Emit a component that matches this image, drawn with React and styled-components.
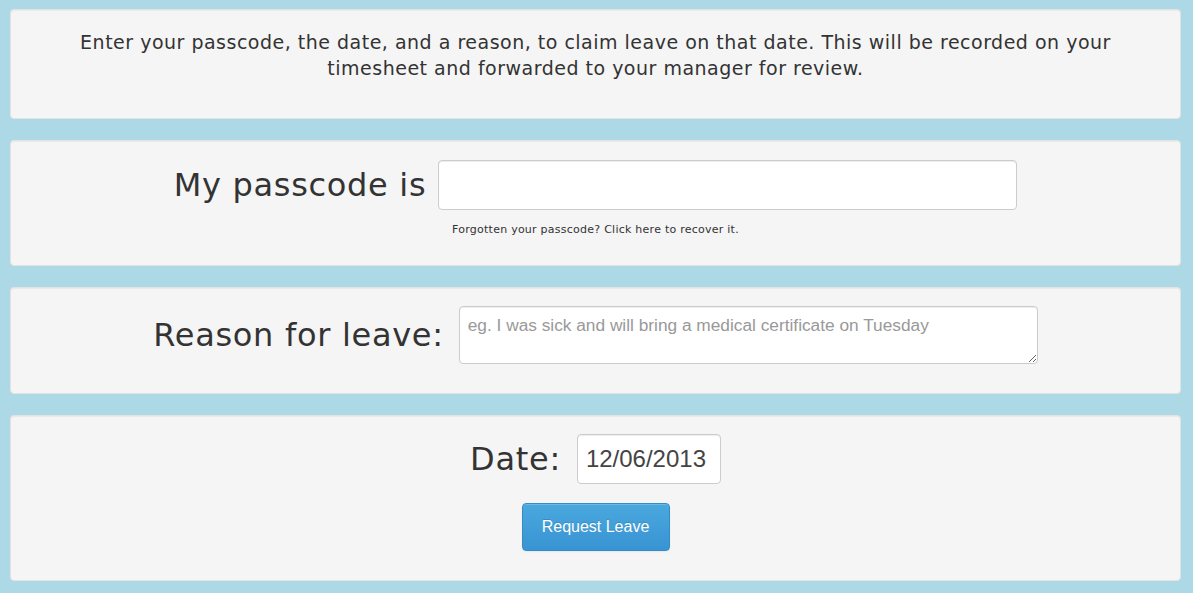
import React from "react";
import styled, { createGlobalStyle } from "styled-components";

const GlobalStyle = createGlobalStyle`
  html, body {
    margin: 0;
    padding: 0;
    background: #add8e6;
  }
  body {
    font-family: "DejaVu Sans", Verdana, sans-serif;
    color: #333333;
  }
`;

const Page = styled.div`
  display: flex;
  flex-direction: column;
  gap: 21px;
  padding: 9px 12px 12px 10px;
`;

const Well = styled.section`
  display: flex;
  flex-direction: column;
  align-items: center;
  background: #f5f5f5;
  border: 1px solid #e3e3e3;
  border-radius: 4px;
  box-shadow: inset 0 1px 1px rgba(0, 0, 0, 0.05);
  padding: ${(p) => p.$pad || "19px"};
`;

const Intro = styled.p`
  margin: 0;
  max-width: 1080px;
  text-align: center;
  font-size: 19px;
  letter-spacing: 0.5px;
  line-height: 26px;
`;

const Row = styled.div`
  display: flex;
  align-items: center;
  justify-content: center;
  gap: ${(p) => p.$gap || "12px"};
`;

const Label = styled.label`
  font-size: 32px;
  letter-spacing: 0.7px;
  line-height: 40px;
  color: #333333;
  white-space: nowrap;
`;

const Input = styled.input`
  box-sizing: border-box;
  width: ${(p) => p.$width};
  height: 50px;
  padding: 4px 8px;
  background: #ffffff;
  border: 1px solid #cccccc;
  border-radius: 4px;
  box-shadow: inset 0 1px 1px rgba(0, 0, 0, 0.075);
  font-family: "Liberation Sans", Arial, sans-serif;
  font-size: 24px;
  color: #444444;
  outline: none;
`;

const TextArea = styled.textarea`
  box-sizing: border-box;
  width: 579px;
  height: 58px;
  padding: 8px 8px 6px;
  background: #ffffff;
  border: 1px solid #cccccc;
  border-radius: 4px;
  box-shadow: inset 0 1px 1px rgba(0, 0, 0, 0.075);
  font-family: "Liberation Sans", Arial, sans-serif;
  font-size: 17.3px;
  line-height: 20px;
  color: #555555;
  outline: none;
  resize: vertical;

  &::placeholder {
    color: #999999;
  }
`;

const Help = styled.a`
  margin-top: 12px;
  font-size: 11px;
  letter-spacing: 0.25px;
  line-height: 16px;
  color: #333333;
  text-decoration: none;
  cursor: pointer;
`;

const Button = styled.button`
  margin-top: 19px;
  width: 148px;
  height: 48px;
  border: 1px solid #358bc6;
  border-radius: 4px;
  background: linear-gradient(#4aa8de, #3894d3);
  box-shadow: inset 0 1px 0 rgba(255, 255, 255, 0.2), 0 1px 2px rgba(0, 0, 0, 0.05);
  font-family: "Liberation Sans", Arial, sans-serif;
  font-size: 16px;
  color: #ffffff;
  text-shadow: 0 -1px 0 rgba(0, 0, 0, 0.15);
  cursor: pointer;
`;

export default function App() {
  return (
    <>
      <GlobalStyle />
      <Page>
        <Well $pad="19px 19px 37px">
          <Intro>
            Enter your passcode, the date, and a reason, to claim leave on that
            date. This will be recorded on your timesheet and forwarded to your
            manager for review.
          </Intro>
        </Well>

        <Well $pad="19px 19px 27px">
          <Row $gap="12px">
            <Label htmlFor="passcode">My passcode is</Label>
            <Input id="passcode" type="password" $width="579px" />
          </Row>
          <Help>Forgotten your passcode? Click here to recover it.</Help>
        </Well>

        <Well $pad="18px 19px 29px">
          <Row $gap="15px">
            <Label htmlFor="reason">Reason for leave:</Label>
            <TextArea
              id="reason"
              placeholder="eg. I was sick and will bring a medical certificate on Tuesday"
            />
          </Row>
        </Well>

        <Well $pad="18px 19px 29px">
          <Row $gap="16px">
            <Label htmlFor="date">Date:</Label>
            <Input id="date" type="text" defaultValue="12/06/2013" $width="144px" />
          </Row>
          <Button type="button">Request Leave</Button>
        </Well>
      </Page>
    </>
  );
}
